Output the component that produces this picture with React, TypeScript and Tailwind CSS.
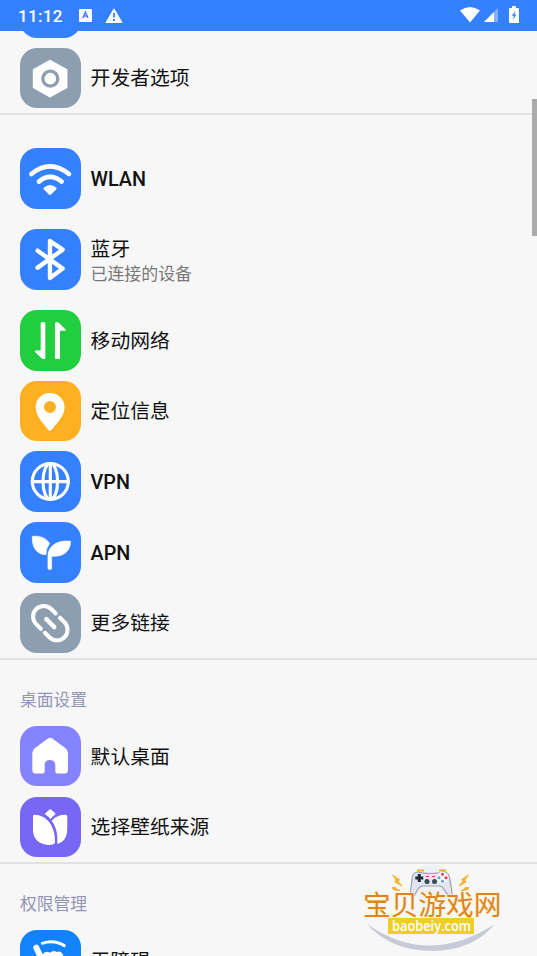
import React from 'react';
import clsx from 'clsx';

const stroke = { fill: 'none', stroke: '#fff', strokeLinecap: 'round', strokeLinejoin: 'round' } as const;

// All tile glyphs are drawn on a 182 x 182 grid
const icons: Record<string, React.ReactNode> = {
    developer: (
        <>
            <path d="M90 39 L139 66 V118 L90 145 L42 118 V66 Z" fill="#fff" stroke="#fff" strokeWidth="7" strokeLinejoin="round" />
            <circle cx="91" cy="92" r="22.5" fill="none" stroke="#8e9eb1" strokeWidth="10" />
        </>
    ),
    wlan: (
        <>
            <path d="M34 78 Q90 32 147 78" {...stroke} strokeWidth="14" />
            <path d="M57 101 Q90 73 125 101" {...stroke} strokeWidth="14" />
            <path d="M72 119 Q90 103 109 119 Q111 121 109 124 L94 139 Q90 143 86 139 L72 125 Q69 122 72 119" fill="#fff" />
        </>
    ),
    bluetooth: <path d="M53 65 L128 119 L90 147 V36 L128 62 L53 116" {...stroke} strokeWidth="13" />,
    mobile: (
        <>
            <path d="M62 40 Q62 37 65 37 H73 Q76 37 76 40 V144 Q76 147 73 147 H67 L45 126 Q43 122 47 122 H62 Z" fill="#fff" />
            <path d="M105 40 Q105 37 108 37 H115 L136 58 Q140 62 136 62 H120 V144 Q120 147 117 147 H108 Q105 147 105 144 Z" fill="#fff" />
        </>
    ),
    location: (
        <path
            fillRule="evenodd"
            d="M90 36 C65 36 47 55 47 79 C47 106 71 128 84 146 Q90 153 96 146 C109 128 134 106 134 79 C134 55 115 36 90 36 Z M90 60 A18 18 0 1 1 90 96 A18 18 0 1 1 90 60 Z"
            fill="#fff"
        />
    ),
    vpn: (
        <g {...stroke} strokeWidth="9.5">
            <circle cx="91" cy="91.5" r="54" />
            <ellipse cx="91" cy="91.5" rx="22" ry="54" />
            <path d="M37 92 H145 M91 38 V145" />
        </g>
    ),
    apn: (
        <>
            <path d="M37 43 Q72 39 89 64 Q78 79 78 98 C50 99 35 75 37 43 Z" fill="#fff" stroke="#fff" strokeWidth="2" strokeLinejoin="round" />
            <path d="M152 58 C116 53 85 69 84 101 V140 Q84 143 89 143 Q95 143 95 140 V103 C128 105 151 91 152 58 Z" fill="#fff" stroke="#fff" strokeWidth="2" strokeLinejoin="round" />
        </>
    ),
    link: (
        <g transform="translate(91 90.5) rotate(45)" {...stroke} strokeWidth="12">
            <path d="M-9 -32 H-28 A32 32 0 0 0 -28 32 H-8" />
            <path d="M9 -32 H28 A32 32 0 0 1 28 32 H9" />
            <path d="M-17 0 H17" strokeWidth="13" />
        </g>
    ),
    home: (
        <path
            d="M83 38 Q90 32 98 38 L136 66 Q144 72 144 81 V132 Q144 143 133 143 H112 Q106 143 106 137 V118 Q106 102 90 102 Q74 102 74 118 V137 Q74 143 68 143 H48 Q37 143 37 132 V81 Q37 72 45 66 Z"
            fill="#fff"
        />
    ),
    wallpaper: (
        <>
            <path d="M88 38 Q91 36 94 38 L106 49 Q107 51 105 53 Q97 58 92 66 Q86 58 77 53 Q74 51 76 49 Z" fill="#fff" />
            <path d="M43 53 C79 53 108 86 105 139 Q98 145 86 144 C56 142 39 125 39 99 V59 Q39 53 43 53 Z" fill="#fff" />
            <path d="M95 71 Q111 53 137 53 Q142 53 142 59 V94 C142 121 132 136 112 141 C114 114 110 91 95 71 Z" fill="#fff" />
        </>
    ),
    accessibility: (
        <>
            <path d="M67 40 Q102 28 133 47" {...stroke} strokeWidth="9" />
            <path d="M49 53 L68 94" {...stroke} strokeWidth="18" />
            <path d="M65 75 Q77 60 90 68 Q101 60 110 66 Q124 61 130 77 V120 H68 Z" fill="#fff" />
        </>
    ),
};

interface SettingRowProps {
    icon: string;
    color: string;
    title: string;
    subtitle?: string;
    tall?: boolean;
}

function SettingRow({ icon, color, title, subtitle, tall }: SettingRowProps) {
    return (
        <div className={clsx('flex shrink-0 items-center gap-[10px] pl-5', tall ? 'h-[80.8px]' : 'h-[70.7px]')}>
            <div className={clsx('h-[60.6px] w-[60.6px] shrink-0 overflow-hidden rounded-[17px]', color)}>
                <svg viewBox="0 0 182 182" className="h-full w-full">{icons[icon]}</svg>
            </div>
            <div className={subtitle ? 'pt-[5px]' : 'pt-[3px]'}>
                <div className={clsx('text-[19.8px] text-[#111]', subtitle ? 'leading-[25px]' : 'leading-[26px]', /[A-Z]/.test(title) && 'font-medium')}>
                    {title}
                </div>
                {subtitle && <div className="text-[16.9px] leading-[25px] text-[#777]">{subtitle}</div>}
            </div>
        </div>
    );
}

function Divider() {
    return <div className="h-[1.5px] shrink-0 bg-[#e1e1e2]" />;
}

function SectionTitle({ children }: { children: React.ReactNode }) {
    return <h2 className="mt-[27px] mb-[7px] h-[27px] shrink-0 pl-5 text-[16.8px] leading-[27px] text-[#9295b4]">{children}</h2>;
}

function StatusBar() {
    return (
        <header className="relative z-10 flex h-[31px] shrink-0 items-center bg-[#3580ff] pl-[18px] text-white">
            <span className="w-[61px] pt-px text-[17px] leading-none font-medium tracking-[0.35px]">11:12</span>
            <svg width="13" height="13" viewBox="0 0 13 13">
                <rect width="13" height="13" rx="1" fill="#fff" />
                <path d="M3.8 9 L6.4 3 L9 9 M4.8 7 H8" fill="none" stroke="#3580ff" strokeWidth="1.4" />
                <path d="M7 11.3 H11" stroke="#b5d0ff" strokeWidth=".7" />
            </svg>
            <svg width="18" height="15" viewBox="0 0 18 15" className="ml-[13px]">
                <path d="M9 .8 L17 14.5 H1 Z" fill="#fff" stroke="#fff" strokeLinejoin="round" />
                <path d="M9 5 V9.6 M9 11 V13" stroke="#3580ff" strokeWidth="1.8" />
            </svg>
            <div className="ml-auto flex items-center pr-[18px]">
                <svg width="20" height="16" viewBox="0 0 20 16" className="-mt-[2px]">
                    <path d="M0 3.5 Q10 -3.5 20 3.5 L10 15.5 Z" fill="#fff" />
                </svg>
                <svg width="14" height="14" viewBox="0 0 14 14" className="-mt-px ml-[4px]">
                    <path d="M0 14 L14 0 V14 Z" fill="#83b1ff" />
                    <path d="M0 14 L10 4 V14 Z" fill="#fff" />
                </svg>
                <svg width="10" height="17" viewBox="0 0 10 17" className="-mt-[2px] ml-[11px]">
                    <path d="M1 2 H3 V0 H7 V2 H9 Q10 2 10 3 V16 Q10 17 9 17 H1 Q0 17 0 16 V3 Q0 2 1 2 Z" fill="#fff" />
                    <path d="M6.5 4.5 L2.8 9.7 H5 L3.8 14 L7.5 8.5 H5.4 Z" fill="#3580ff" />
                </svg>
            </div>
        </header>
    );
}

function Watermark() {
    return (
        <div className="absolute top-[862px] left-[360px] h-[94px] w-[145px]">
            <svg width="145" height="94" viewBox="0 0 145 94">
                <circle cx="72" cy="22" r="20" fill="#eff0f3" />
                <path d="M7 62 Q68 105 135 62 Q112 89 72 89 Q31 89 7 62 Z" fill="#c8cad8" />
                <path d="M58 9.5 V8.5 H63 V9.5 M80 9.5 V8.5 H85 V9.5" fill="none" stroke="#e8b23d" strokeWidth="2" />
                {/* Game pad */}
                <path d="M57 10 Q71 13 84 10 Q89 10 90 18 L92 30 Q92 34 89 34 Q86 31 83 26 Q82 24 79 24 H63 Q60 24 58 27 L54 34 Q50 35 50.5 30 L52 18 Q52 11 57 10 Z" fill="#e3e4ed" stroke="#9a9fba" strokeWidth="1.2" />
                <path d="M59.3 12 V20 M55.3 16 H63.3" stroke="#202c3d" strokeWidth="3" />
                <g fill="#344b5a">
                    <circle cx="67" cy="19.5" r="2.5" />
                    <circle cx="74.5" cy="19.5" r="2.5" />
                </g>
                <path d="M66 14.5 H69 M72 14.5 H75" stroke="#d73f54" strokeWidth="1.2" />
                <circle cx="82.5" cy="15.7" r="6" fill="#f6f6fa" />
                <circle cx="82.5" cy="12.2" r="1.5" fill="#e53b51" />
                <circle cx="82.5" cy="19.2" r="1.5" fill="#4aaccd" />
                <circle cx="79" cy="15.7" r="1.5" fill="#4aaccd" />
                <circle cx="86" cy="15.7" r="1.5" fill="#e53b51" />
                <g fill="#f6be2b" stroke="#e3a321" strokeWidth=".6">
                    <path d="M32.5 13 L39.5 17.5 L38.5 19.5 L42 24 L34.5 20 L36 18 Z M32 25.5 L36 25.5 L36.5 27 L40 28.5 L33.5 28 Z" />
                    <path d="M108.5 13 L101.5 17.5 L102.5 19.5 L99 24 L106.5 20 L105 18 Z M109 25.5 L105 25.5 L104.5 27 L101 28.5 L107.5 28 Z" />
                </g>
                <text x="3" y="53" fontSize="27.7" fill="#df8420" stroke="#fff3c6" strokeWidth="1" paintOrder="stroke">宝贝游戏网</text>
                <rect x="28" y="56" width="86" height="16" fill="#edce27" />
                <text x="32" y="69" fontSize="14.5" textLength="79" lengthAdjust="spacingAndGlyphs" fill="#fff" className="font-['Open_Sans',sans-serif] font-semibold">baobeiy.com</text>
            </svg>
        </div>
    );
}

export default function App() {
    return (
        <div className="relative flex h-[956px] w-full flex-col overflow-hidden bg-[#f7f7f8] font-['Roboto','Noto_Sans_CJK_SC',sans-serif]">
            <StatusBar />

            <main className="flex min-h-0 flex-1 flex-col overflow-hidden">
                {/* Bottom edge of the row scrolled under the status bar */}
                <div className="-mt-[54px] ml-5 h-[60.6px] w-[60.6px] shrink-0 rounded-[17px] bg-[#3580ff]" />
                <div className="mt-[5px] shrink-0">
                    <SettingRow icon="developer" color="bg-[#8e9eb1]" title="开发者选项" />
                </div>
                <Divider />

                <div className="shrink-0 pt-[23.5px]">
                    <SettingRow icon="wlan" color="bg-[#3580ff]" title="WLAN" tall />
                    <SettingRow icon="bluetooth" color="bg-[#3580ff]" title="蓝牙" subtitle="已连接的设备" tall />
                    <div className="pt-[5px]">
                        <SettingRow icon="mobile" color="bg-[#21ce3d]" title="移动网络" />
                        <SettingRow icon="location" color="bg-[#ffb021]" title="定位信息" />
                        <SettingRow icon="vpn" color="bg-[#3580ff]" title="VPN" />
                        <SettingRow icon="apn" color="bg-[#3580ff]" title="APN" />
                        <SettingRow icon="link" color="bg-[#8e9eb1]" title="更多链接" />
                    </div>
                </div>
                <Divider />

                <SectionTitle>桌面设置</SectionTitle>
                <SettingRow icon="home" color="bg-[#8583ff]" title="默认桌面" />
                <SettingRow icon="wallpaper" color="bg-[#7767f6]" title="选择壁纸来源" />
                <Divider />

                <SectionTitle>权限管理</SectionTitle>
                <SettingRow icon="accessibility" color="bg-[#1283ff]" title="无障碍" />
            </main>

            {/* Scrollbar thumb */}
            <div className="absolute top-[99px] right-0 h-[137px] w-[5px] bg-[#ababab]" />
            <Watermark />
        </div>
    );
}
